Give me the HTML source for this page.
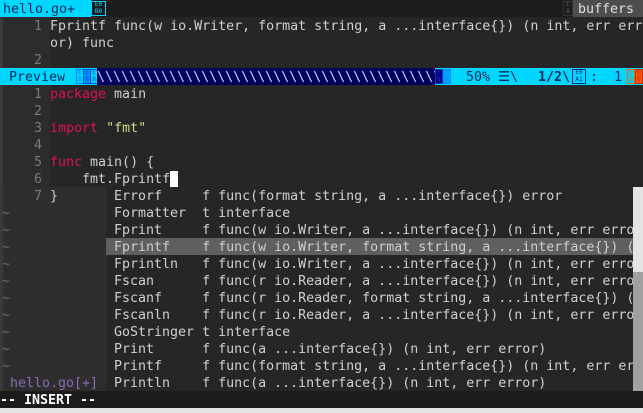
<!DOCTYPE html>
<html><head><meta charset="utf-8"><style>
*{margin:0;padding:0;box-sizing:border-box}
body{width:643px;height:413px;background:#262626;overflow:hidden;position:relative;font-family:"DejaVu Sans Mono","Liberation Mono",monospace;font-size:13.3px;color:#d0d0d0}
.r{position:absolute;height:17px;line-height:19px;white-space:pre}
.ln{color:#7a7a7a;position:absolute;width:14px;text-align:right;left:28px}
.k{color:#e0105a}.s{color:#d7d787}
.bx{position:absolute;top:1px;height:15px;border:1px solid;font-size:6px;line-height:6.5px;text-align:center;padding-top:0px;white-space:pre}
.it{position:absolute;left:106px;width:527px;height:17px;line-height:19px;white-space:pre}
.sel{background:#5f5f5f}
.t{color:#6a6a6a}
</style></head><body>
<div style="position:absolute;left:0;top:17px;width:3px;height:374px;background:#3a3a3a"></div>
<div style="position:absolute;left:3px;top:17px;width:47px;height:170px;background:#2c2c2c"></div>
<div style="position:absolute;left:3px;top:187px;width:103px;height:204px;background:#2e2e2e"></div>
<div class="r" style="top:0;left:0;width:643px;background:#1c1c1c"></div>
<div class="r" style="top:0;left:0;width:91px;background:#00d7ff;color:#002a5a;padding-left:3px">hello.go+</div>
<div class="bx" style="left:91px;width:15px;border-color:#00d7ff;color:#00d7ff;top:1px">E0
B0</div>
<div class="bx" style="left:563px;width:10px;border-color:#333;color:#555">E
B</div>
<div class="r" style="top:0;left:573px;width:70px;background:#4e4e4e;color:#e0e0e0;padding-left:5px">buffers</div>
<div class="r" style="top:17px;left:0"><span class="ln">1</span></div>
<div class="r" style="top:17px;left:50px">Fprintf func(w io.Writer, format string, a ...interface{}) (n int, err err</div>
<div class="r" style="top:34px;left:50px">or) func</div>
<div class="r" style="top:51px;left:0"><span class="ln">2</span></div>
<div class="r" style="top:68px;left:0;width:643px;background:#00d7ff"></div>
<div class="r" style="top:68px;left:0;color:#002a5a;padding-left:9px">Preview</div>
<div class="bx" style="top:69px;left:76px;width:8px;border-color:#0080ff;color:#0080ff">E
B</div>
<div class="bx" style="top:69px;left:83px;width:8px;border-color:#0050d0;color:#0050d0;background:#0090ff">E
B</div>
<div class="bx" style="top:69px;left:90px;width:8px;border-color:#0050d0;color:#0050d0">E
B</div>
<div class="r" style="top:68px;left:97px;width:338px;background:#00005f;color:#d0d0ff;overflow:hidden">\\\\\\\\\\\\\\\\\\\\\\\\\\\\\\\\\\\\\\\\\\\\</div>
<div class="bx" style="top:69px;left:435px;width:8px;border-color:#0040c0;color:#0040c0;background:#000080">E
B</div>
<div class="bx" style="top:69px;left:443px;width:8px;border-color:#0090ff;color:#0090ff;background:#00a0ff">E
B</div>
<div class="r" style="top:68px;left:466px;color:#002a5a">50% ☰\</div>
<div class="r" style="top:68px;left:538px;color:#002a5a;font-weight:bold">1/2\</div>
<div class="bx" style="top:69px;left:572px;width:14px;border-color:#002a7a;color:#002a7a">E0
A1</div>
<div class="r" style="top:68px;left:590px;color:#002a5a">:  1</div>
<div class="bx" style="top:69px;left:627px;width:8px;border-color:#ff6000;color:#ff6000;background:#00d7ff">E
B</div>
<div class="bx" style="top:69px;left:635px;width:8px;border-color:#c03000;color:#c03000;background:#ff5000">E
B</div>
<div class="r" style="top:85px;left:0"><span class="ln">1</span></div><div class="r" style="top:85px;left:50px"><span class="k">package</span> main</div>
<div class="r" style="top:102px;left:0"><span class="ln">2</span></div>
<div class="r" style="top:119px;left:0"><span class="ln">3</span></div><div class="r" style="top:119px;left:50px"><span class="k">import</span> <span class="s">"fmt"</span></div>
<div class="r" style="top:136px;left:0"><span class="ln">4</span></div>
<div class="r" style="top:153px;left:0"><span class="ln">5</span></div><div class="r" style="top:153px;left:50px"><span class="k">func</span> main() {</div>
<div class="r" style="top:170px;left:0"><span class="ln">6</span></div><div class="r" style="top:170px;left:50px">    fmt.Fprintf</div>
<div style="position:absolute;top:171px;left:170px;width:8px;height:16px;background:#fff"></div>
<div class="r" style="top:187px;left:0"><span class="ln">7</span></div><div class="r" style="top:187px;left:50px">}</div>
<div class="r t" style="top:204px;left:2px">~</div>
<div class="r t" style="top:221px;left:2px">~</div>
<div class="r t" style="top:238px;left:2px">~</div>
<div class="r t" style="top:255px;left:2px">~</div>
<div class="r t" style="top:272px;left:2px">~</div>
<div class="r t" style="top:289px;left:2px">~</div>
<div class="r t" style="top:306px;left:2px">~</div>
<div class="r t" style="top:323px;left:2px">~</div>
<div class="r t" style="top:340px;left:2px">~</div>
<div class="r t" style="top:357px;left:2px">~</div>
<div class="r" style="top:374px;left:10px;color:#8a6cb8">hello.go[+]</div>
<div style="position:absolute;left:106px;top:187px;width:527px;height:204px;background:#262626"></div>
<div class="it" style="top:187px"> Errorf     f func(format string, a ...interface{}) error</div>
<div class="it" style="top:204px"> Formatter  t interface</div>
<div class="it" style="top:221px"> Fprint     f func(w io.Writer, a ...interface{}) (n int, err erro</div>
<div class="it sel" style="top:238px"> Fprintf    f func(w io.Writer, format string, a ...interface{}) (</div>
<div class="it" style="top:255px"> Fprintln   f func(w io.Writer, a ...interface{}) (n int, err erro</div>
<div class="it" style="top:272px"> Fscan      f func(r io.Reader, a ...interface{}) (n int, err erro</div>
<div class="it" style="top:289px"> Fscanf     f func(r io.Reader, format string, a ...interface{}) (</div>
<div class="it" style="top:306px"> Fscanln    f func(r io.Reader, a ...interface{}) (n int, err erro</div>
<div class="it" style="top:323px"> GoStringer t interface</div>
<div class="it" style="top:340px"> Print      f func(a ...interface{}) (n int, err error)</div>
<div class="it" style="top:357px"> Printf     f func(format string, a ...interface{}) (n int, err erro</div>
<div class="it" style="top:374px"> Println    f func(a ...interface{}) (n int, err error)</div>
<div style="position:absolute;left:633px;top:187px;width:10px;height:85px;background:#e4e4e4"></div>
<div style="position:absolute;left:633px;top:272px;width:10px;height:119px;background:#a0a0a0"></div>
<div class="r" style="top:391px;left:0;width:643px;background:#1c1c1c;color:#fff;font-weight:bold">-- INSERT --</div>
<div style="position:absolute;left:0;top:408px;width:643px;height:5px;background:#e4e4e4"></div>
</body></html>
